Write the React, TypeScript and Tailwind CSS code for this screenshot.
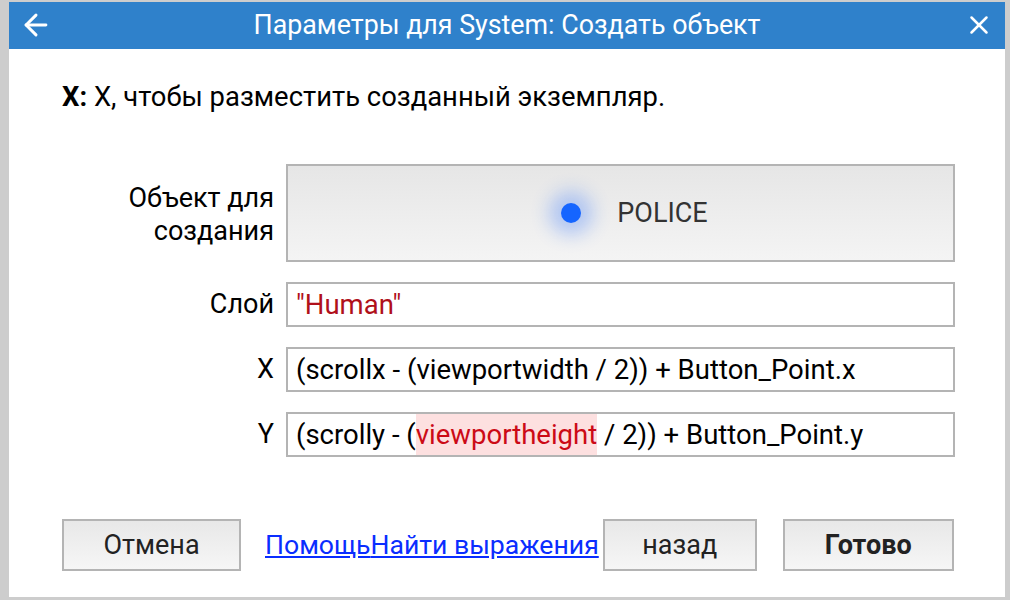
import { ArrowLeft, X } from "lucide-react";

const font = { fontFamily: 'Roboto, "Liberation Sans", sans-serif' };

function Field({ label, children }: { label: string; children: React.ReactNode }) {
  return (
    <div className="flex items-center">
      <div className="w-[277px] pr-[12px] text-right text-[27px] text-black">{label}</div>
      <div className="flex h-[45px] w-[669px] items-center border-2 border-[#b4b4b4] bg-white px-[8px] text-[27.5px] text-black">
        {children}
      </div>
    </div>
  );
}

function Btn({ children, bold, className }: { children: React.ReactNode; bold?: boolean; className?: string }) {
  return (
    <button
      className={`flex h-[52px] items-center justify-center border-2 border-[#b4b4b4] bg-gradient-to-b from-[#e8e8e8] to-[#f6f6f6] text-[27px] text-[#222] ${bold ? "font-bold" : ""} ${className ?? ""}`}
    >
      {children}
    </button>
  );
}

export default function App() {
  return (
    <div className="h-[600px] w-[1010px] bg-[#cdcdcd] pl-[9px] pr-[5px] pt-[2px] pb-[3px]" style={font}>
      <div className="flex h-full flex-col bg-white">
        {/* Header */}
        <div className="relative flex h-[47px] items-center justify-center bg-[#2f81cb] text-white">
          <ArrowLeft className="absolute left-[10px] top-[6px]" size={34} strokeWidth={2.1} />
          <div className="text-[26.8px]">Параметры для System: Создать объект</div>
          <X className="absolute right-[11px] top-[8px]" size={30} strokeWidth={2} />
        </div>

        <div className="pl-[53px] pt-[28px] text-[27.4px] text-black">
          <span className="font-bold">X:</span> X, чтобы разместить созданный экземпляр.
        </div>

        <div className="mt-[46px] flex flex-col gap-[20px]">
          <div className="flex items-center">
            <div className="w-[277px] pr-[12px] pt-[4px] text-right text-[27px] leading-[33px] text-black">
              Объект для
              <br />
              создания
            </div>
            <div className="flex h-[98px] w-[669px] items-center justify-center gap-[36px] border-2 border-[#b4b4b4] bg-gradient-to-b from-[#e6e6e6] to-[#f4f4f4] pl-[28px]">
              <div className="h-[20px] w-[20px] rounded-full bg-[#1565ff] shadow-[0_0_18px_12px_rgba(40,110,255,0.3)]" />
              <span className="text-[27px] text-[#333]">POLICE</span>
            </div>
          </div>
          <Field label="Слой">
            <span className="text-[#b0101a]">"Human"</span>
          </Field>
          <Field label="X">(scrollx - (viewportwidth / 2)) + Button_Point.x</Field>
          <Field label="Y">
            (scrolly - (<span className="bg-[#fde0e0] text-[#cc0a16]">viewportheight</span>&nbsp;/ 2)) + Button_Point.y
          </Field>
        </div>

        <div className="mt-[62px] flex items-center pl-[53px]">
          <Btn className="w-[179px]">Отмена</Btn>
          <a href="#" className="ml-[24px] text-[26.6px] text-[#0a2dff] underline">Помощь</a>
          <a href="#" className="text-[26.6px] text-[#0a2dff] underline">Найти выражения</a>
          <Btn className="ml-[4px] w-[154px]">назад</Btn>
          <Btn bold className="ml-[26px] w-[171px]">Готово</Btn>
        </div>
      </div>
    </div>
  );
}
